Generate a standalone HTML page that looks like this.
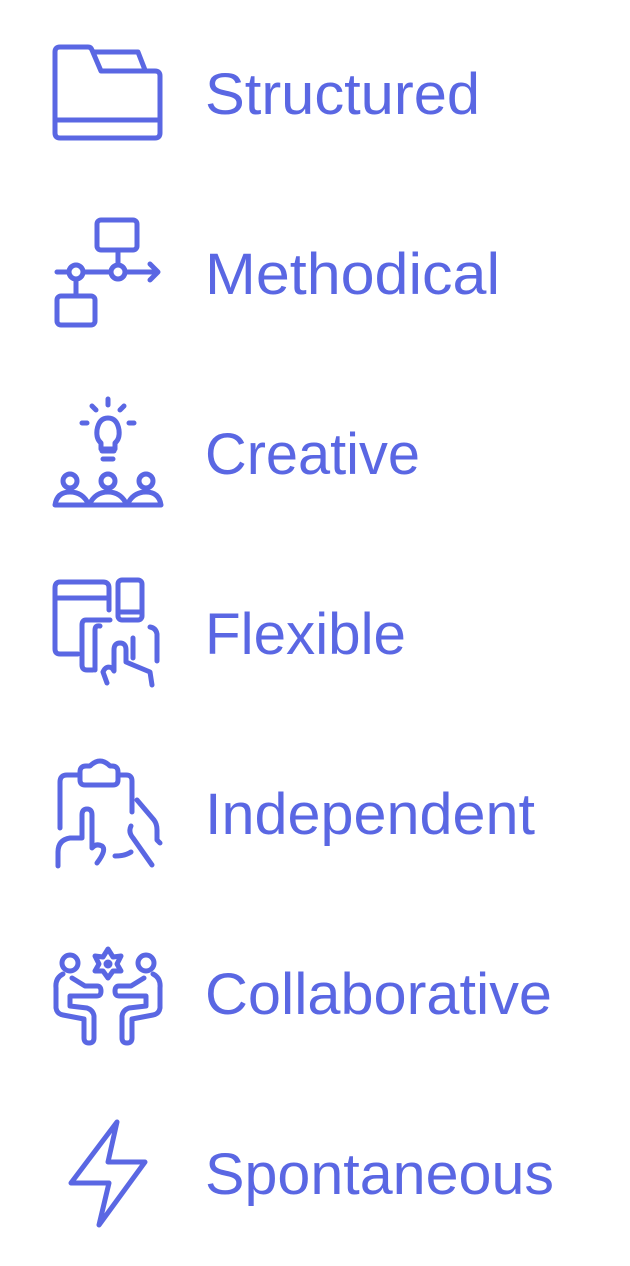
<!DOCTYPE html>
<html><head><meta charset="utf-8"><style>
html,body{margin:0;padding:0;background:#fff;width:630px;height:1266px;overflow:hidden}
svg{display:block}
text{font-family:"Liberation Sans",Arial,sans-serif;font-size:58px;fill:#5A67E3}
</style></head><body>
<svg width="630" height="1266" viewBox="0 0 630 1266">
<g fill="none" stroke="#5A67E3" stroke-width="5" stroke-linecap="round" stroke-linejoin="round">
<path d="M60 47 H88 Q91 47 92 50 L101 71 H155 Q160 71 160 76 V133 Q160 138 155 138 H60 Q55 138 55 133 V52 Q55 47 60 47 Z"/>
<path d="M95 52 H138 L145 70"/>
<path d="M55 120 H160"/>
<rect x="97" y="220" width="40" height="30" rx="4"/>
<path d="M118 250 V265"/>
<circle cx="118" cy="272" r="7"/>
<circle cx="76" cy="272" r="7"/>
<path d="M57 272 H69 M83 272 H111 M125 272 H157 M150 264 L158 272 L150 280"/>
<path d="M76 279 V296"/>
<rect x="57" y="296" width="38" height="29" rx="4"/>
<path d="M108 399 V405 M92 406 L96 410 M124 406 L120 410 M82 423 H87 M129 423 H134"/>
<path d="M101 449 V443 Q96 439 97 430 Q99 418 108 418 Q117 418 119 430 Q120 439 115 443 V449 Z"/>
<path d="M102 451 H114 M103 459 H113"/>
<circle cx="70" cy="481" r="7"/><circle cx="108" cy="481" r="7"/><circle cx="146" cy="481" r="7"/>
<path d="M55 505 Q57 492 70 492 Q83 492 89 505 Z M89 505 Q95 492 108 492 Q121 492 127 505 Z M127 505 Q133 492 146 492 Q159 492 161 505 Z"/>
<path d="M78 654 H60 Q55 654 55 649 V588 Q55 582 60 582 H103 Q109 582 109 588 V610"/>
<path d="M55 598 H109"/>
<rect x="118" y="580" width="24" height="40" rx="4"/>
<path d="M118 612 H142"/>
<path d="M110 620 H86 Q82 620 82 625 V665 Q82 670 87 670 H93"/>
<path d="M95 670 V630 M95 630 Q95 625 100 626"/>
<path d="M107 683 L103 672 Q106 665 112 668 L114 671 V650 Q114 643 120 643 Q126 643 126 650 V662 L150 672 L152 685"/>
<path d="M133 638 V658 M150 627 Q156 628 157 634 V661"/>
<path d="M60 828 V782 Q60 775 67 775 H80"/>
<path d="M80 775 V772 Q80 766 86 766 H90 Q95 761 100 761 Q105 761 110 766 H112 Q118 766 118 772 V780 Q118 785 113 785 H85 Q80 785 80 780 V775"/>
<path d="M118 775 H126 Q132 775 132 781 V812"/>
<path d="M137 800 L154 820 Q157 824 157 830 V840 L160 843"/>
<path d="M58 866 V852 Q58 840 70 838 H82 V815 Q82 809 87 809 Q92 809 92 815 V848 Q96 843 102 846 Q107 850 97 863"/>
<path d="M115 856 Q125 856 131 852"/>
<path d="M131 826 Q128 832 133 838 L152 865"/>
<circle cx="70" cy="963" r="8"/>
<circle cx="146" cy="963" r="8"/>
<path d="M108 949 L113 957 L121 956 L117 964 L121 971 L113 971 L108 978 L103 971 L95 971 L99 964 L95 956 L103 957 Z"/>
<circle cx="108" cy="964" r="2" fill="#5A67E3"/>
<path d="M63 974 Q55 978 56 988 V1008 Q57 1014 63 1015 L84 1019 V1038 Q84 1043 89 1043 Q94 1043 94 1038 V1016 Q93 1010 87 1008 L70 1006 V996 H97 Q101 996 101 991 Q101 986 97 986 H85 L72 978"/>
<path d="M153 974 Q161 978 160 988 V1008 Q159 1014 153 1015 L132 1019 V1038 Q132 1043 127 1043 Q122 1043 122 1038 V1016 Q123 1010 129 1008 L146 1006 V996 H119 Q115 996 115 991 Q115 986 119 986 H131 L144 978"/>
<path d="M117 1122 L71 1183 H109 L99 1225 L145 1162 H108 Z"/>
</g>
<text x="205" y="114" textLength="275" lengthAdjust="spacingAndGlyphs">Structured</text>
<text x="205" y="294" textLength="295" lengthAdjust="spacingAndGlyphs">Methodical</text>
<text x="205" y="474" textLength="215" lengthAdjust="spacingAndGlyphs">Creative</text>
<text x="205" y="654" textLength="201" lengthAdjust="spacingAndGlyphs">Flexible</text>
<text x="205" y="834" textLength="330" lengthAdjust="spacingAndGlyphs">Independent</text>
<text x="205" y="1014" textLength="347" lengthAdjust="spacingAndGlyphs">Collaborative</text>
<text x="205" y="1194" textLength="349" lengthAdjust="spacingAndGlyphs">Spontaneous</text>
</svg>
</body></html>
